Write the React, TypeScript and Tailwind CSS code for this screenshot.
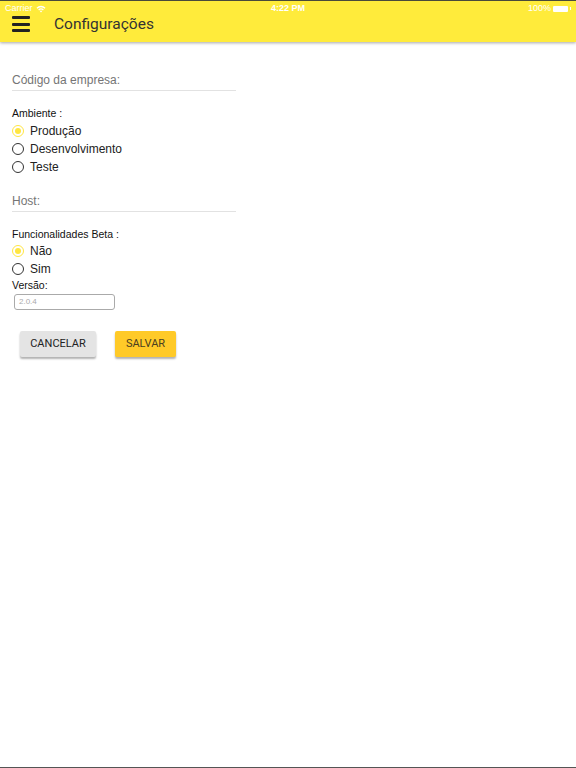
import React from 'react';

const font = { fontFamily: 'Roboto, "Liberation Sans", sans-serif' };
const helv = { fontFamily: '"Liberation Sans", Arial, sans-serif' };

interface RadioProps {
  label: string;
  checked?: boolean;
}

const Radio: React.FC<RadioProps> = ({ label, checked }) => (
  <div className="flex items-center h-[18px]">
    {checked ? (
      <span className="w-[12px] h-[12px] rounded-full border-[1.5px] border-[#ffe642] flex items-center justify-center">
        <span className="w-[6px] h-[6px] rounded-full bg-[#ffe642]" />
      </span>
    ) : (
      <span className="w-[12px] h-[12px] rounded-full border-[1.5px] border-[#333]" />
    )}
    <span className="ml-[6px] text-[12px] leading-[16px] text-[#222]" style={helv}>
      {label}
    </span>
  </div>
);

const TextField: React.FC<{ placeholder: string }> = ({ placeholder }) => (
  <div className="w-[224px] border-b border-[#e2e2e2] pb-[2px]">
    <div className="text-[12px] leading-[16px] text-[#757575]" style={helv}>
      {placeholder}
    </div>
  </div>
);

const Label: React.FC<{ text: string; className?: string }> = ({ text, className = '' }) => (
  <div className={`text-[10.5px] leading-[14px] text-[#111] ${className}`} style={helv}>
    {text}
  </div>
);

export default function App() {
  return (
    <div className="w-[576px] h-[768px] bg-white relative overflow-hidden" style={font}>
      {/* top app bar with status bar */}
      <div className="h-[42px] bg-[#ffeb3b] border-t border-[#4a4a3a] shadow-[0_1px_3px_rgba(0,0,0,0.35)] relative">
        <div className="flex items-center justify-between h-[15px] px-[5px] text-white text-[9px]" style={helv}>
          <div className="flex items-center gap-[3px]">
            <span>Carrier</span>
            <svg width="10" height="8" viewBox="0 0 10 8">
              <path d="M0.5 2.8 A6.2 6.2 0 0 1 9.5 2.8 L8.6 3.7 A5 5 0 0 0 1.4 3.7 Z" fill="white" />
              <path d="M2.2 4.5 A3.8 3.8 0 0 1 7.8 4.5 L6.9 5.4 A2.6 2.6 0 0 0 3.1 5.4 Z" fill="white" />
              <path d="M3.9 6.2 A1.5 1.5 0 0 1 6.1 6.2 L5 7.4 Z" fill="white" />
            </svg>
          </div>
          <span className="absolute left-1/2 -translate-x-1/2 font-bold">4:22 PM</span>
          <div className="flex items-center gap-[2px]">
            <span>100%</span>
            <span className="w-[15px] h-[6px] bg-white rounded-[1px]" />
            <span className="w-[1px] h-[3px] bg-white" />
          </div>
        </div>
        <div className="flex items-center h-[16px]">
          <div className="ml-[12px] w-[18px] flex flex-col gap-[3.5px]">
            <span className="h-[3px] bg-[#222] rounded-[1px]" />
            <span className="h-[3px] bg-[#222] rounded-[1px]" />
            <span className="h-[3px] bg-[#222] rounded-[1px]" />
          </div>
          <span className="ml-[24px] text-[15.5px] leading-[18px] text-[#333]">Configurações</span>
        </div>
      </div>

      {/* settings form */}
      <div className="pl-[12px] pt-[30px]">
        <TextField placeholder="Código da empresa:" />

        <Label text="Ambiente :" className="mt-[15px]" />
        <div className="mt-[2px]">
          <Radio label="Produção" checked />
          <Radio label="Desenvolvimento" />
          <Radio label="Teste" />
        </div>

        <div className="mt-[17px]">
          <TextField placeholder="Host:" />
        </div>

        <Label text="Funcionalidades Beta :" className="mt-[15px]" />
        <div className="mt-[1px]">
          <Radio label="Não" checked />
          <Radio label="Sim" />
        </div>

        <Label text="Versão:" />
        <div className="mt-[2px] ml-[2px] w-[101px] h-[16px] border border-[#aaa] rounded-[3px] flex items-center px-[4px]">
          <span className="text-[8px] text-[#aaa]" style={helv}>2.0.4</span>
        </div>

        <div className="flex gap-[19px] mt-[21px] ml-[8px]">
          <button className="w-[76px] h-[26px] bg-[#e4e4e4] rounded-[2px] text-[11px] font-normal text-[#222] shadow-[0_2px_2px_rgba(0,0,0,0.3)]">
            CANCELAR
          </button>
          <button className="w-[61px] h-[26px] bg-[#ffca28] rounded-[2px] text-[11px] font-normal text-[#4a4020] shadow-[0_2px_2px_rgba(0,0,0,0.3)]">
            SALVAR
          </button>
        </div>
      </div>

      <div className="absolute bottom-0 left-0 right-0 h-[1px] bg-[#555]" />
    </div>
  );
}
